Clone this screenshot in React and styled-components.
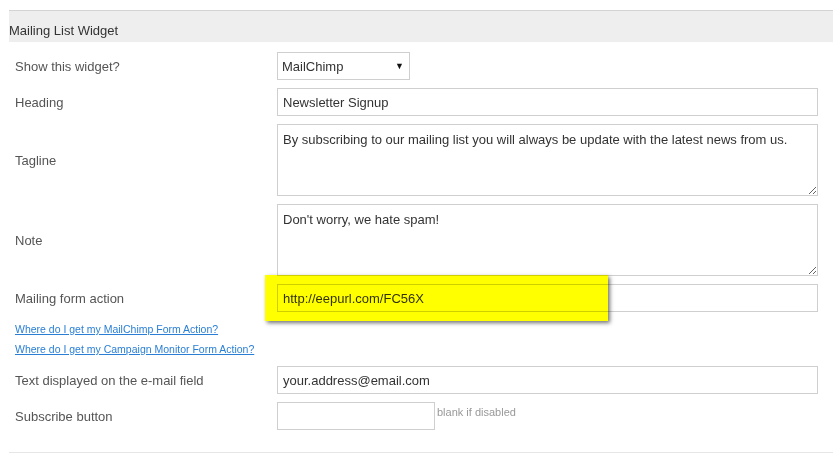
import styled, { createGlobalStyle } from "styled-components";

const GlobalStyle = createGlobalStyle`
  body {
    margin: 0;
    background: #fff;
    font-family: "Liberation Sans", Arial, sans-serif;
  }
`;

const fields = {
  heading: "Newsletter Signup",
  tagline:
    "By subscribing to our mailing list you will always be update with the latest news from us.",
  note: "Don't worry, we hate spam!",
  action: "http://eepurl.com/FC56X",
  email: "your.address@email.com",
};

export default function App() {
  return (
    <>
      <GlobalStyle />
      <Page>
        <Section>
          <Header>Mailing List Widget</Header>
          <Rows>
            <Row>
              <Label>Show this widget?</Label>
              <SelectBox>
                <Select defaultValue="mailchimp">
                  <option value="mailchimp">MailChimp</option>
                  <option value="campaign">Campaign Monitor</option>
                  <option value="none">None</option>
                </Select>
                <Arrow>▼</Arrow>
              </SelectBox>
            </Row>
            <Row>
              <Label>Heading</Label>
              <Input defaultValue={fields.heading} />
            </Row>
            <Row>
              <Label>Tagline</Label>
              <TextArea defaultValue={fields.tagline} />
            </Row>
            <Row>
              <Label>Note</Label>
              <TextArea defaultValue={fields.note} />
            </Row>
            <Row>
              <Label>Mailing form action</Label>
              <Field>
                <Input defaultValue={fields.action} />
                <Highlight />
              </Field>
            </Row>
            <Links>
              <Link href="#">Where do I get my MailChimp Form Action?</Link>
              <Link href="#">Where do I get my Campaign Monitor Form Action?</Link>
            </Links>
            <Row>
              <Label>Text displayed on the e-mail field</Label>
              <Input defaultValue={fields.email} />
            </Row>
            <Row>
              <Label>Subscribe button</Label>
              <Field>
                <Inline>
                  <Input $width="158px" />
                  <Hint>blank if disabled</Hint>
                </Inline>
              </Field>
            </Row>
          </Rows>
        </Section>
      </Page>
    </>
  );
}

const Page = styled.div`
  padding-top: 10px;
  width: 833px;
`;

const Section = styled.section`
  margin-left: 9px;
  border-bottom: 1px solid #e6e6e6;
`;

const Header = styled.h2`
  margin: 0;
  height: 31px;
  border-top: 1px solid #d4d4d4;
  background: #eeeeee;
  font-size: 13px;
  font-weight: normal;
  color: #333;
  line-height: 39px;
  overflow: hidden;
`;

const Rows = styled.div`
  display: flex;
  flex-direction: column;
  gap: 8px;
  padding: 10px 15px 22px 6px;
`;

const Row = styled.div`
  display: grid;
  grid-template-columns: 262px 541px;
  align-items: center;
`;

const Label = styled.label`
  font-size: 13px;
  color: #555;
`;

const Field = styled.div`
  position: relative;
  display: flex;
`;

const Input = styled.input`
  box-sizing: border-box;
  width: ${({ $width }) => $width || "100%"};
  height: 28px;
  margin: 0;
  padding: 0 5px;
  border: 1px solid #cfcfcf;
  background: #fff;
  font-family: "Liberation Sans", Arial, sans-serif;
  font-size: 13px;
  color: #333;
  outline: none;
`;

const TextArea = styled.textarea`
  box-sizing: border-box;
  display: block;
  width: 100%;
  height: 72px;
  margin: 0;
  padding: 7px 5px;
  border: 1px solid #cfcfcf;
  font-family: "Liberation Sans", Arial, sans-serif;
  font-size: 13px;
  line-height: 16px;
  color: #333;
  outline: none;
`;

const SelectBox = styled.div`
  position: relative;
  width: 133px;
  height: 28px;
`;

const Select = styled.select`
  box-sizing: border-box;
  width: 100%;
  height: 100%;
  margin: 0;
  padding: 0 4px;
  border: 1px solid #cfcfcf;
  border-radius: 0;
  background: #fff;
  appearance: none;
  font-family: "Liberation Sans", Arial, sans-serif;
  font-size: 13px;
  color: #333;
  outline: none;
`;

const Arrow = styled.span`
  position: absolute;
  right: 6px;
  top: 10px;
  font-size: 9px;
  line-height: 9px;
  color: #111;
  pointer-events: none;
`;

const Highlight = styled.div`
  position: absolute;
  left: -12px;
  top: -9px;
  width: 343px;
  height: 46px;
  background: #ffff00;
  mix-blend-mode: multiply;
  box-shadow: 2px 2px 4px rgba(0, 0, 0, 0.55);
  pointer-events: none;
`;

const Links = styled.div`
  display: flex;
  flex-direction: column;
  margin: -1px 0 -1px;
`;

const Link = styled.a`
  font-size: 10.5px;
  line-height: 20px;
  color: #2a7fd4;
  text-decoration: underline;
  width: max-content;
`;

const Inline = styled.div`
  display: flex;
  align-items: flex-start;
  gap: 2px;
`;

const Hint = styled.span`
  font-size: 11px;
  color: #999;
  margin-top: 4px;
`;
